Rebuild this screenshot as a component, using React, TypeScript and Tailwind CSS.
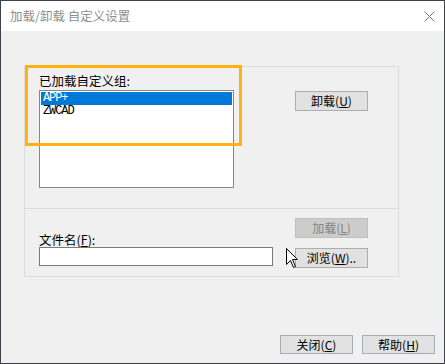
import React from "react";

const cjk = { fontFamily: '"Noto Sans CJK SC", "Noto Sans", sans-serif' };
const mono = { fontFamily: '"Liberation Mono", "DejaVu Sans Mono", monospace' };

function Btn({
  label,
  k,
  suffix = "",
  disabled = false,
  h = "h-[20px]",
  border = "border-[#adadad]",
}: {
  label: string;
  k: string;
  suffix?: string;
  disabled?: boolean;
  h?: string;
  border?: string;
}) {
  return (
    <div
      className={`w-[73px] ${h} flex items-center justify-center border text-[12px] leading-none ${
        disabled ? "bg-[#cccccc] border-[#bfbfbf] text-[#838383]" : `bg-[#e1e1e1] ${border} text-black`
      }`}
      style={cjk}
    >
      <span>
        {label}(<span className="underline underline-offset-1">{k}</span>){suffix}
      </span>
    </div>
  );
}

export default function App() {
  return (
    <div className="w-[445px] h-[364px] border border-[#3e4148] flex flex-col overflow-hidden" style={cjk}>
      {/* Title bar */}
      <div className="h-[30px] bg-white flex items-center justify-between pl-[9px] pr-[9px] shrink-0">
        <span className="text-[12.5px] text-[#8f8f8f] leading-none">加载/卸载 自定义设置</span>
        <svg width="11" height="11" viewBox="0 0 11 11" className="mt-[1px]">
          <path d="M0.5 0.5 L10.5 10.5 M10.5 0.5 L0.5 10.5" stroke="#7a7a7a" strokeWidth="1" fill="none" />
        </svg>
      </div>

      {/* Body */}
      <div className="relative flex-1 bg-[#f0f0f0] flex flex-col">
        <div className="mt-[35px] ml-[23px] w-[375px] h-[211px] border border-[#dcdcdc] flex flex-col">
          {/* top section */}
          <div className="h-[142px] flex pl-[14px] border-b border-[#dcdcdc]">
            <div className="w-[256px] flex flex-col pt-[7px]">
              <div className="text-[12.5px] leading-[14px] h-[14px] text-black mb-[2px]">已加载自定义组:</div>
              <div className="w-[195px] h-[98px] border border-[#828790] bg-white p-[1px]">
                <div
                  className="h-[13px] bg-[#0078d7] text-white text-[12px] leading-[13px] pl-[2px] tracking-[-1.1px]"
                  style={mono}
                >
                  APP+
                </div>
                <div className="h-[13px] text-black text-[12px] leading-[13px] pl-[2px] tracking-[-1.1px]" style={mono}>
                  ZWCAD
                </div>
              </div>
            </div>
            <div className="pt-[24px]">
              <Btn label="卸载" k="U" />
            </div>
          </div>
          {/* bottom section */}
          <div className="flex-1 flex pl-[14px]">
            <div className="w-[256px] flex flex-col pt-[24px]">
              <div className="text-[12.5px] leading-[14px] h-[14px] text-black">
                文件名(<span className="underline underline-offset-1">F</span>):
              </div>
              <div className="w-[234px] h-[19px] border border-[#7a7a7a] bg-white" />
            </div>
            <div className="pt-[9px] flex flex-col gap-[10px]">
              <Btn label="加载" k="L" disabled />
              <Btn label="浏览" k="W" suffix=".." />
            </div>
          </div>
        </div>

        <div className="flex-1" />

        <div className="flex justify-end gap-[9px] pr-[9px] pb-[9px]">
          <Btn label="关闭" k="C" h="h-[19px]" border="border-[#a3adb8]" />
          <Btn label="帮助" k="H" h="h-[19px]" border="border-[#a3adb8]" />
        </div>

        {/* Orange highlight annotation */}
        <div className="absolute left-[24px] top-[34px] w-[217px] h-[81px] border-[3px] border-[#ffb10f]" />

        {/* Mouse cursor */}
        <svg className="absolute left-[285px] top-[217px]" width="13" height="21" viewBox="0 0 13 21">
          <path
            d="M0.5 0.5 L0.5 16.5 L4.5 12.5 L7.5 19.5 L9.5 18.5 L6.5 11.5 L11.5 11.5 Z"
            fill="white"
            stroke="black"
            strokeWidth="1"
          />
        </svg>
      </div>
    </div>
  );
}
